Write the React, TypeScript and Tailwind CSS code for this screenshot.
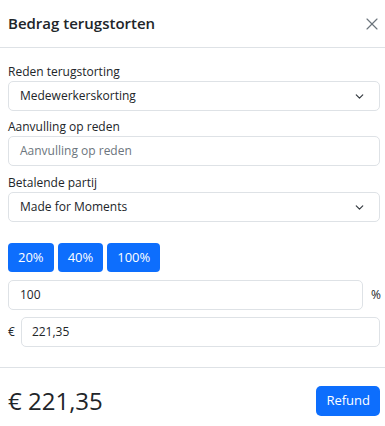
import { ChevronDown, X } from "lucide-react";

const font = { fontFamily: '"Open Sans", "Noto Sans", sans-serif' };

function Label({ children }: { children: string }) {
  return <div className="text-[12px] leading-[18px] text-[#212529]">{children}</div>;
}

function SelectBox({ value }: { value: string }) {
  return (
    <div className="flex h-[30px] items-center justify-between rounded-[5px] border border-[#dee2e6] bg-white pl-[11px] pr-[13px] text-[12px] text-[#212529]">
      <span>{value}</span>
      <ChevronDown size={13} strokeWidth={2.2} className="text-[#343a40]" />
    </div>
  );
}

export default function App() {
  return (
    <div className="h-[426px] w-[385px] bg-white text-[#212529]" style={font}>
      <div className="flex h-[48px] items-center justify-between border-b border-[#dee2e6] pl-[8px] pr-[3px]">
        <h5 className="text-[15px] font-semibold">Bedrag terugstorten</h5>
        <X size={20} strokeWidth={1.4} className="text-[#6c757d]" />
      </div>

      <div className="flex flex-col pl-[8px] pr-[5px] pt-[15px]">
        <Label>Reden terugstorting</Label>
        <SelectBox value="Medewerkerskorting" />

        <div className="mt-[7px]">
          <Label>Aanvulling op reden</Label>
          <div className="flex h-[30px] items-center rounded-[5px] border border-[#dee2e6] pl-[11px] text-[12px] text-[#6c757d]">
            Aanvulling op reden
          </div>
        </div>

        <div className="mt-[8px]">
          <Label>Betalende partij</Label>
          <SelectBox value="Made for Moments" />
        </div>

        <div className="mt-[21px] flex gap-[4px]">
          {["20%", "40%", "100%"].map((p) => (
            <button
              key={p}
              className="h-[29px] rounded-[4px] bg-[#0d6efd] px-[10px] text-[13px] text-white"
            >
              {p}
            </button>
          ))}
        </div>

        <div className="mt-[8px] flex items-center gap-[8px]">
          <div className="flex h-[30px] flex-1 items-center rounded-[5px] border border-[#dee2e6] pl-[11px] text-[12px]">
            100
          </div>
          <span className="w-[9px] text-[12px]">%</span>
        </div>

        <div className="mt-[7px] flex items-center gap-[6px]">
          <span className="text-[12px]">€</span>
          <div className="flex h-[30px] flex-1 items-center rounded-[5px] border border-[#dee2e6] pl-[10px] text-[12px]">
            221,35
          </div>
        </div>
      </div>

      <div className="mt-[20px] flex items-center justify-between border-t border-[#dee2e6] pl-[8px] pr-[5px] pt-[18px]">
        <span className="text-[24px] leading-[30px]">€ 221,35</span>
        <button className="h-[30px] rounded-[5px] bg-[#0d6efd] px-[10px] text-[13px] text-white">
          Refund
        </button>
      </div>
    </div>
  );
}
